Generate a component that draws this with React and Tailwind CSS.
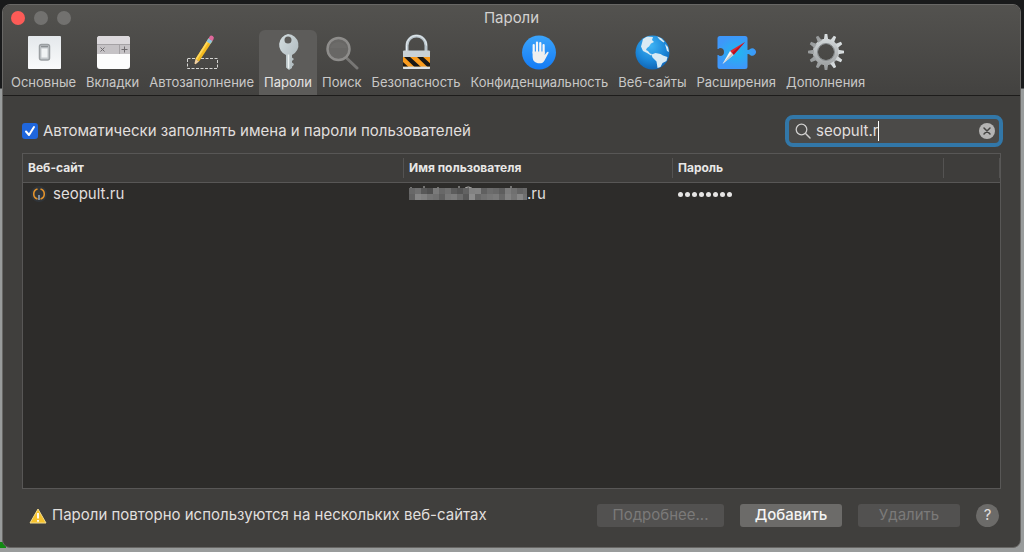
import { useState } from 'react'

const TABS = [
    { id: 'general', label: 'Основные', icon: GeneralIcon },
    { id: 'tabs', label: 'Вкладки', icon: TabsIcon },
    { id: 'autofill', label: 'Автозаполнение', icon: PencilIcon },
    { id: 'passwords', label: 'Пароли', icon: KeyIcon },
    { id: 'search', label: 'Поиск', icon: LensIcon },
    { id: 'security', label: 'Безопасность', icon: LockIcon },
    { id: 'privacy', label: 'Конфиденциальность', icon: HandIcon },
    { id: 'websites', label: 'Веб-сайты', icon: GlobeIcon },
    { id: 'extensions', label: 'Расширения', icon: PuzzleIcon },
    { id: 'advanced', label: 'Дополнения', icon: GearIcon },
]

// brightness of each tile that hides the user name, two rows
const MASK = [
    [104, 112, 88, 80, 122, 104, 112, 92, 84, 98, 130, 132, 96, 108, 104, 94, 124, 112, 100, 106],
    [98, 134, 128, 116, 112, 96, 120, 124, 108, 88, 140, 104, 112, 118, 122, 104, 130, 116, 134, 112],
]

function GeneralIcon() {
    return (
        <svg viewBox="0 0 36 36" className="size-9">
            <defs>
                <linearGradient id="plate" x1="0" y1="0" x2="0" y2="1">
                    <stop offset="0" stopColor="#e4e8eb" />
                    <stop offset="1" stopColor="#fafbfc" />
                </linearGradient>
            </defs>
            <rect x="2" y="2" width="33" height="33" rx="1" fill="url(#plate)" />
            <rect x="13.500" y="10.500" width="10" height="15.500" rx="2" fill="#c5c9cc" stroke="#9b9fa2" strokeWidth="1.500" />
            <rect x="15.500" y="14.500" width="6" height="9" fill="#f1f3f4" />
            <path d="M15 12.500h7" stroke="#8c9093" strokeWidth="1.500" />
        </svg>
    )
}

function TabsIcon() {
    return (
        <svg viewBox="0 0 36 36" className="size-9">
            <rect x="2" y="2" width="33" height="33" rx="3" fill="#fdfdfd" />
            <path d="M2 11V5a3 3 0 0 1 3-3h27a3 3 0 0 1 3 3v6z" fill="#dcd9dc" />
            <path d="M2 11h33v9H2z" fill="#c5c2c5" />
            <path d="M2 10.500h33M24.500 11v9" stroke="#a5a2a5" />
            <path d="M5.500 13.500l4 4m0-4l-4 4M29.500 12.500v6m-3-3h6" stroke="#6e6b6e" fill="none" />
        </svg>
    )
}

function PencilIcon() {
    return (
        <svg viewBox="0 0 36 36" className="size-9">
            <rect x="3.500" y="24.500" width="30" height="10" fill="none" stroke="#d5d5d3" strokeDasharray="3 1.500" />
            <path d="M24.500 4.500l4 2.500L15 27.500 11.500 25z" fill="#f3ba20" />
            <path d="M24.500 4.500l1.500 1L13 26l-1.500-1z" fill="#ffd95a" />
            <path d="M11.500 25l3.500 2.500-5 4z" fill="#f1cf9f" />
            <path d="M10 31.500l.4-2 1.300.8z" fill="#222" />
            <path d="M22.500 7.500l2-3.200 4 2.500-2 3.200z" fill="#8fc3dc" />
            <path d="M24.500 4.500l1-1.700a2.300 2.300 0 0 1 4 2.400l-1 1.700z" fill="#e0699c" />
        </svg>
    )
}

function KeyIcon() {
    return (
        <svg viewBox="0 0 36 36" className="size-9">
            <defs>
                <linearGradient id="key" x1="0" y1="0" x2="1" y2="1">
                    <stop offset="0" stopColor="#d3dde0" />
                    <stop offset="1" stopColor="#a9b4b8" />
                </linearGradient>
            </defs>
            <path
                fillRule="evenodd"
                fill="url(#key)"
                d="M18 0a11 11 0 0 1 4 21v2.500l2 1.500-2 2v1.500l2 1.500-1 2-1 .5v1.500L19 36l-3-2.500V21A11 11 0 0 1 18 0zm0 2.500a3.500 3.500 0 1 0 0 7 3.500 3.500 0 0 0 0-7z"
            />
            <path d="M18.500 20.500v14" stroke="#edf3f4" strokeWidth="1.500" />
        </svg>
    )
}

function LensIcon() {
    return (
        <svg viewBox="0 0 36 36" className="size-9">
            <path d="M22.500 24L33 34" stroke="#777674" strokeWidth="3" strokeLinecap="round" />
            <circle cx="14.500" cy="15" r="11" fill="#686765" stroke="#8e8d8b" strokeWidth="2.500" />
            <path d="M6 14a9 9 0 0 1 17 0z" fill="#6c6b69" />
        </svg>
    )
}

function LockIcon() {
    return (
        <svg viewBox="0 0 36 36" className="size-9">
            <defs>
                <clipPath id="lockBand"><path d="M5 23h27v9.500H5z" /></clipPath>
            </defs>
            <path d="M9 18v-6.500a9.500 9.500 0 0 1 19 0V18" fill="none" stroke="#b9c5cc" strokeWidth="3" />
            <path d="M8.500 17v-5.500a10 10 0 0 1 20 0" fill="none" stroke="#e9eff2" />
            <rect x="5" y="16.500" width="27" height="18.500" rx="1" fill="#c9d1d6" />
            <g clipPath="url(#lockBand)">
                <path d="M5 23h27v10H5z" fill="#f99b1d" />
                <path d="M5 22h6l12 11h-6.500zM18 22h6l12 11h-6.500zM5 28l5.500 5H5z" fill="#191715" />
            </g>
            <path d="M5 34h27" stroke="#edf0f2" />
        </svg>
    )
}

function HandIcon() {
    return (
        <svg viewBox="0 0 36 36" className="size-9">
            <defs>
                <linearGradient id="hand" x1="0" y1="0" x2="0" y2="1">
                    <stop offset="0" stopColor="#3ba4fb" />
                    <stop offset="1" stopColor="#147bf5" />
                </linearGradient>
            </defs>
            <circle cx="18" cy="18.500" r="17" fill="url(#hand)" />
            <path d="M12.700 19v-8M16 18V8.500M19.300 18V9M22.600 19v-8" stroke="#f7f7f7" strokeWidth="2.200" strokeLinecap="round" />
            <path d="M11.600 17.500h12.100V21l2-2.600c.8-1 2.300-.5 1.800.7l-4 7.400c-1 2-2.500 2.800-5 2.800-4.300 0-6.900-2.300-6.900-6.800z" fill="#efefef" />
        </svg>
    )
}

function GlobeIcon() {
    return (
        <svg viewBox="0 0 36 36" className="size-9">
            <defs>
                <radialGradient id="globe" cx=".45" cy=".3" r=".75">
                    <stop offset="0" stopColor="#3fb4f4" />
                    <stop offset=".6" stopColor="#1b86d8" />
                    <stop offset="1" stopColor="#0f5fae" />
                </radialGradient>
                <clipPath id="globeEdge"><circle cx="18.500" cy="18.500" r="17" /></clipPath>
            </defs>
            <circle cx="18.500" cy="18.500" r="17" fill="url(#globe)" />
            <g clipPath="url(#globeEdge)" fill="#d9eaf4">
                <path d="M9 5l4-2.500 6 .5-1 3 2 2-3 1.500-2 3-2 1.500-1 2 2 1 2 2.500 2 .5-1 1.500-4-2.500-4-2-2-4.500L8 9z" />
                <path d="M17.500 20.500l4-1.500 5 1 2.500 1.500 4.500 1.500-1 4-4 2-2 4-3 1-1-6.500-4-4z" />
                <path d="M23 2.500l4 1.500 3.500 3.500-1 1-4-3zM31 10l3 3 1 5-2-1z" />
            </g>
        </svg>
    )
}

function PuzzleIcon() {
    return (
        <svg viewBox="0 0 40 36" className="h-9 w-10">
            <defs>
                <radialGradient id="puzzle">
                    <stop offset="0" stopColor="#20b9ef" />
                    <stop offset="1" stopColor="#3e97fa" />
                </radialGradient>
            </defs>
            <path
                fill="url(#puzzle)"
                d="M4 2h25a2.500 2.500 0 0 1 2.500 2.500V16c1 .2 2-.2 2.500-1a3.700 3.700 0 1 1 0 6c-.5-.8-1.500-1.200-2.500-1v12.500A2.500 2.500 0 0 1 29 35H4a2.500 2.500 0 0 1-2.500-2.500V21c1 0 1.500.5 2.500 1a4 4 0 1 0 0-8c-1 .5-1.500 1-2.500 1V4.500A2.500 2.500 0 0 1 4 2z"
            />
            <path d="M29 8L14 17l3.500 4z" fill="#e2262f" />
            <path d="M29 8L15.800 19l1.700 2z" fill="#b4121f" />
            <path d="M6.500 30L14 17l3.500 4z" fill="#f7f7f7" />
            <path d="M6.500 30l9.300-11 1.700 2z" fill="#c3c6c9" />
        </svg>
    )
}

function GearIcon() {
    return (
        <svg viewBox="0 0 36 36" className="size-9">
            <defs>
                <linearGradient id="gear" gradientUnits="userSpaceOnUse" x1="0" y1="0" x2="0" y2="36">
                    <stop offset="0" stopColor="#dbe0e2" />
                    <stop offset="1" stopColor="#96999a" />
                </linearGradient>
            </defs>
            <g fill="none" stroke="url(#gear)">
                <circle cx="18" cy="18" r="10.700" strokeWidth="5" />
            </g>
            <g fill="url(#gear)">
                {[0, 30, 60, 90, 120, 150].map(deg => (
                    <path key={deg} d="M16.700 0h2.600l.9 6h-4.400zM16.700 36h2.600l.9-6h-4.400z" transform={`rotate(${deg} 18 18)`} />
                ))}
            </g>
            <circle cx="18" cy="18" r="8.500" fill="none" stroke="#84888a" />
        </svg>
    )
}

function WarningIcon() {
    return (
        <svg viewBox="0 0 18 16" className="h-4 w-[18px]">
            <path d="M9 1l8 14H1z" fill="#f6c22c" stroke="#f3dc8e" strokeLinejoin="round" />
            <path d="M9 5v5.500M9 12v1.700" stroke="#fff" strokeWidth="1.800" />
        </svg>
    )
}

function HiddenName() {
    return (
        <svg viewBox="0 0 120 16" className="h-4 w-[120px]" aria-hidden="true">
            {/* letter tops that stick out above the tiles */}
            <path d="M4 1v2M17 0v4M31 1v2M52 0v4M104 0v4M57 3q4-4 9 0" stroke="#bdbcbb" fill="none" />
            {MASK.map((row, y) => row.map((v, x) => (
                <rect key={`${x}-${y}`} x={2 + x * 6} y={2 + y * 6} width="6" height="6" fill={`rgb(${v},${v},${v})`} />
            )))}
        </svg>
    )
}

export default function App() {
    const [active, setActive] = useState('passwords')
    const [autofill, setAutofill] = useState(true)
    const [query, setQuery] = useState('seopult.r')

    return (
        <div className="relative flex min-h-screen flex-col bg-[#999c9c] bg-linear-to-b from-[#191a1b] from-[88px] to-[#999c9c] to-[89px] pt-1 pr-[3px] pb-1 pl-[2px] font-[Inter,sans-serif] text-[#e0dfde]">
            {/* green corner of the page behind the window */}
            <span aria-hidden="true" className="absolute bottom-1 left-0 h-[6px] w-[6px] bg-[#108a12]" />
            <div className="relative flex flex-1 flex-col overflow-hidden rounded-lg border border-[#686765] bg-[#403f3d]">
                <header className="border-b border-[#1d1c1b] bg-linear-to-b from-[#53524f] to-[#434240]">
                    <div className="relative flex h-[25px] items-center justify-center">
                        <div className="absolute left-2 flex gap-[9px]">
                            <button aria-label="Закрыть" className="size-[14px] rounded-full bg-[#fc5b57]" />
                            <button aria-label="Свернуть" className="size-[14px] rounded-full bg-[#72716f]" />
                            <button aria-label="Развернуть" className="size-[14px] rounded-full bg-[#72716f]" />
                        </div>
                        <h1 className="text-[15px] leading-5 text-[#d3d2d1]">Пароли</h1>
                    </div>
                    <nav className="flex pl-[3px]">
                        {TABS.map(({ id, label, icon: Icon }) => (
                            <button
                                key={id}
                                onClick={() => setActive(id)}
                                className={`flex h-[65px] flex-col items-center rounded-t-md px-[5px] pt-1 text-[13px] leading-6 ${id === active ? 'bg-[#5d5c5a] text-[#e4e3e2]' : 'text-[#c9c8c7]'}`}
                            >
                                <Icon />
                                {label}
                            </button>
                        ))}
                    </nav>
                </header>

                <main className="flex flex-1 flex-col px-[19px] pt-[19px] pb-5">
                    <div className="flex h-8 items-center justify-between">
                        <label className="flex items-center gap-[5px] text-[15px]">
                            <span className="relative flex size-4">
                                <input
                                    type="checkbox"
                                    checked={autofill}
                                    onChange={e => setAutofill(e.target.checked)}
                                    className="peer size-4 appearance-none rounded-[3px] bg-[#6b6a68] checked:bg-[#1f66dc]"
                                />
                                <svg viewBox="0 0 16 16" className="pointer-events-none absolute inset-0 hidden peer-checked:block">
                                    <path d="M4 8.500l3 3.500 5-8" fill="none" stroke="#fff" strokeWidth="2" strokeLinecap="round" strokeLinejoin="round" />
                                </svg>
                            </span>
                            Автоматически заполнять имена и пароли пользователей
                        </label>
                        <div className="-mr-[2px] flex h-8 w-[218px] items-center rounded-lg border-4 border-[#3277a8] bg-[#4b4a48] pr-1 pl-[6px]">
                            <svg viewBox="0 0 16 16" className="size-4">
                                <path d="M10.800 10.800l4.200 4.200" stroke="#cfcecd" strokeWidth="1.500" strokeLinecap="round" />
                                <circle cx="6.500" cy="6.500" r="5.300" fill="none" stroke="#cfcecd" strokeWidth="1.300" />
                            </svg>
                            <input
                                type="text"
                                aria-label="Поиск"
                                value={query}
                                onChange={e => setQuery(e.target.value)}
                                className="ml-[5px] field-sizing-content text-[15px] outline-none"
                            />
                            <span className="h-5 w-px bg-white" />
                            <button aria-label="Очистить" onClick={() => setQuery('')} className="ml-auto">
                                <svg viewBox="0 0 16 16" className="size-4">
                                    <circle cx="8" cy="8" r="8" fill="#b5b4b3" />
                                    <path d="M5 5l6 6M11 5l-6 6" stroke="#454442" strokeWidth="1.500" strokeLinecap="round" />
                                </svg>
                            </button>
                        </div>
                    </div>

                    <div className="mt-[6px] flex-1 border border-[#585756] bg-[#2d2c2a]">
                        <table className="w-full table-fixed border-collapse text-left">
                            <colgroup>
                                <col className="w-[381px]" />
                                <col className="w-[269px]" />
                                <col />
                                <col className="w-14" />
                            </colgroup>
                            <thead className="border-b border-[#585756] bg-[#3e3d3b] text-xs font-semibold text-[#e8e7e6]">
                                <tr className="h-7">
                                    <th className="p-0"><div className="border-r border-[#545352] pl-[5px] leading-5">Веб-сайт</div></th>
                                    <th className="p-0"><div className="border-r border-[#545352] pl-[5px] leading-5">Имя пользователя</div></th>
                                    <th className="p-0"><div className="border-r border-[#545352] pl-[5px] leading-5">Пароль</div></th>
                                    <th className="p-0"><div className="h-5 border-r border-[#545352]" /></th>
                                </tr>
                            </thead>
                            <tbody className="text-[15px]">
                                <tr className="h-6">
                                    <td className="p-0">
                                        <div className="flex items-center gap-[6px] pl-2">
                                            <svg viewBox="0 0 16 16" className="size-4">
                                                <circle cx="8" cy="8" r="8" fill="#30353a" />
                                                <path d="M6.500 13A5.200 5.200 0 0 1 6.500 3M9.500 3a5.200 5.200 0 0 1 0 10" fill="none" stroke="#e0912c" strokeWidth="1.600" />
                                                <path d="M8 9v5" stroke="#7f8ea0" strokeWidth="2" />
                                            </svg>
                                            seopult.ru
                                        </div>
                                    </td>
                                    <td className="p-0">
                                        <div className="flex items-center pl-[3px]"><HiddenName />.ru</div>
                                    </td>
                                    <td className="p-0">
                                        <div className="flex gap-[2px] pl-[5px]" role="img" aria-label="Пароль скрыт">
                                            {Array.from({ length: 8 }, (_, i) => (
                                                <span key={i} className="size-[5px] rounded-full bg-[#e6e5e4]" />
                                            ))}
                                        </div>
                                    </td>
                                    <td />
                                </tr>
                            </tbody>
                        </table>
                    </div>

                    <footer className="mt-[15px] flex items-center pr-[2px] text-[15px]">
                        <div className="flex items-center gap-[5px] pl-[7px]">
                            <WarningIcon />
                            Пароли повторно используются на нескольких веб-сайтах
                        </div>
                        <button disabled className="ml-auto h-[23px] w-[127px] rounded-[3px] bg-[#525150] text-[#7b7a79]">Подробнее...</button>
                        <button className="ml-4 h-[23px] w-[102px] rounded-[3px] bg-[#6c6b69] font-medium text-[#f4f4f4]">Добавить</button>
                        <button disabled className="ml-4 h-[23px] w-[102px] rounded-[3px] bg-[#525150] text-[#7b7a79]">Удалить</button>
                        <button aria-label="Справка" className="ml-4 size-[23px] rounded-full bg-[#6c6b69]">?</button>
                    </footer>
                </main>
            </div>
        </div>
    )
}
